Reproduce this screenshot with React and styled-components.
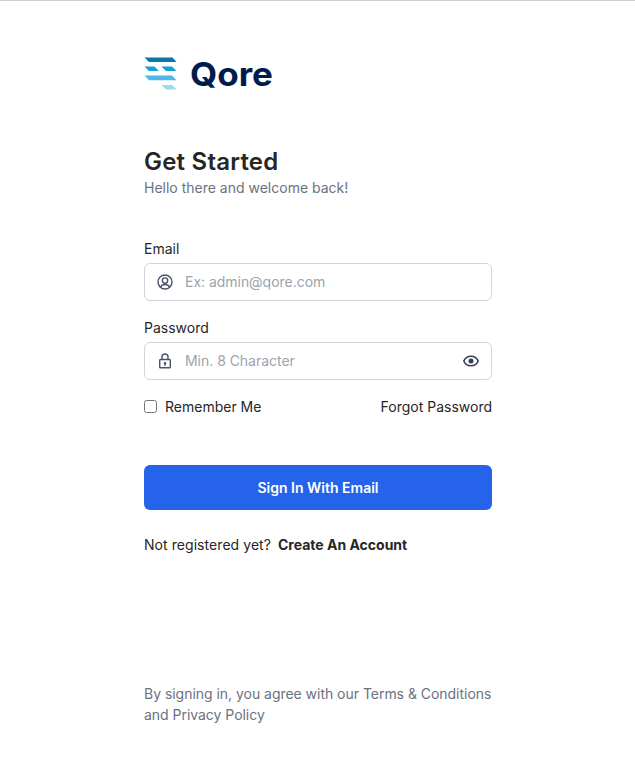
import React from "react";
import styled, { createGlobalStyle } from "styled-components";

const GlobalStyle = createGlobalStyle`
  * { box-sizing: border-box; }
  body { margin: 0; background: #fff; font-family: Inter, sans-serif; font-size: 14px; line-height: 21px; color: #262626; }
`;
const Page = styled.main`
  min-height: 780px; border-top: 1px solid #d1d1d1; display: flex; flex-direction: column; padding: 53px 0 0 144px;
`;
const Panel = styled.div`width: 348px; display: flex; flex-direction: column;`;
const Logo = styled.svg`display: block; width: 132px; height: 40px;`;
const Wordmark = styled.text`
  font-family: Inter, sans-serif; font-weight: 700; font-size: 33px; fill: #001c4f;
`;
const Title = styled.h1`margin: 52px 0 0; font-size: 24px; line-height: 32px; font-weight: 600; letter-spacing: 0.22px;`;
const Muted = styled.p`margin: 0; color: #6b7280;`;
const Greeting = styled(Muted)`margin-top: -1px;`;
const Form = styled.form`display: flex; flex-direction: column; margin-top: 40px;`;
const Field = styled.label`display: flex; flex-direction: column; gap: 4px; margin-bottom: 16px;`;
const InputBox = styled.span`
  height: 38px; border: 1px solid #d1d5db; border-radius: 6px; display: flex; align-items: center; padding: 0 12px; gap: 12px;
`;
const Input = styled.input`
  flex: 1; min-width: 0; height: 21px; margin-bottom: 1px; border: 0; padding: 0; outline: 0; background: transparent;
  font: inherit; letter-spacing: -0.03px; color: #262626;
  &::placeholder { color: #9ca3af; opacity: 1; }
`;
const Icon = styled.svg`
  width: 16px; height: 16px; flex: none; display: block; fill: none; stroke: #475569; stroke-width: 1.4;
  stroke-linecap: round; stroke-linejoin: round;
`;
const EyeIcon = styled(Icon)`stroke: #334155; stroke-width: 1.6;`;
const Options = styled.div`display: flex; justify-content: space-between; align-items: center;`;
const Remember = styled.label`display: flex; align-items: center; gap: 8px;`;
const Check = styled.input`margin: 0; width: 13px; height: 13px;`;
const TextLink = styled.a`color: inherit; font-weight: ${p => (p.$strong ? 700 : 400)};`;
const Button = styled.button`
  margin-top: 48px; height: 45px; border: 0; border-radius: 6px; background: #2563eb; color: #fff; font: 600 14px/21px Inter, sans-serif;
`;
const Register = styled.p`margin: 24px 0 0; display: flex; gap: 7px;`;
const Prompt = styled.span`letter-spacing: 0.06px;`;
const Legal = styled(Muted)`margin-top: 128px; white-space: nowrap; letter-spacing: -0.03px;`;

function QoreLogo() {
  return (
    <Logo viewBox="0 0 132 40" role="img" aria-label="Qore">
      <path fill="#0878a8" d="M.5 3.4H28.5L32.5 8H5Z" />
      <path fill="#18a0d8" d="M.5 12.6H10.5L15 17.1H5ZM17.5 12.6H28L32.5 17.1H22Z" />
      <path fill="#50b8e8" d="M.5 21.6H28L32.5 26.2H5Z" />
      <path fill="#a0d8f0" d="M17.5 31H28L32.5 35.5H22Z" />
      <Wordmark x="46" y="32" textLength="83" lengthAdjust="spacingAndGlyphs">Qore</Wordmark>
    </Logo>
  );
}

function UserIcon() {
  return (
    <Icon viewBox="0 0 16 16">
      <circle cx="8" cy="8" r="7" />
      <circle cx="8" cy="6.6" r="2.7" />
      <path d="M3.6 13.1C4.3 11.3 5.7 10.5 8 10.5s3.7.8 4.4 2.6" />
    </Icon>
  );
}

function LockIcon() {
  return (
    <Icon viewBox="0 0 16 16">
      <rect x="2.7" y="6.5" width="10.6" height="8.3" rx=".8" />
      <path d="M5 6.3V4a3 3 0 0 1 6 0v2.3M8 10.5v1.8" />
      <circle cx="8" cy="10.2" r=".6" />
    </Icon>
  );
}

function ShowIcon() {
  return (
    <EyeIcon viewBox="0 0 16 16">
      <path d="M.8 8C2.2 4.8 4.8 3.2 8 3.2S13.8 4.8 15.2 8C13.8 11.2 11.2 12.8 8 12.8S2.2 11.2.8 8Z" />
      <circle cx="8" cy="8" r="1.7" fill="#334155" />
    </EyeIcon>
  );
}

export default function App() {
  return (
    <>
      <GlobalStyle />
      <Page>
        <Panel>
          <QoreLogo />
          <Title>Get Started</Title>
          <Greeting>Hello there and welcome back!</Greeting>
          <Form>
            <Field>Email<InputBox><UserIcon /><Input placeholder="Ex: admin@qore.com" /></InputBox></Field>
            <Field>Password<InputBox><LockIcon /><Input type="password" placeholder="Min. 8 Character" /><ShowIcon /></InputBox></Field>
            <Options><Remember><Check type="checkbox" />Remember Me</Remember><TextLink>Forgot Password</TextLink></Options>
            <Button type="button">Sign In With Email</Button>
          </Form>
          <Register><Prompt>Not registered yet?</Prompt><TextLink $strong>Create An Account</TextLink></Register>
          <Legal>By signing in, you agree with our Terms & Conditions<br />and Privacy Policy</Legal>
        </Panel>
      </Page>
    </>
  );
}
